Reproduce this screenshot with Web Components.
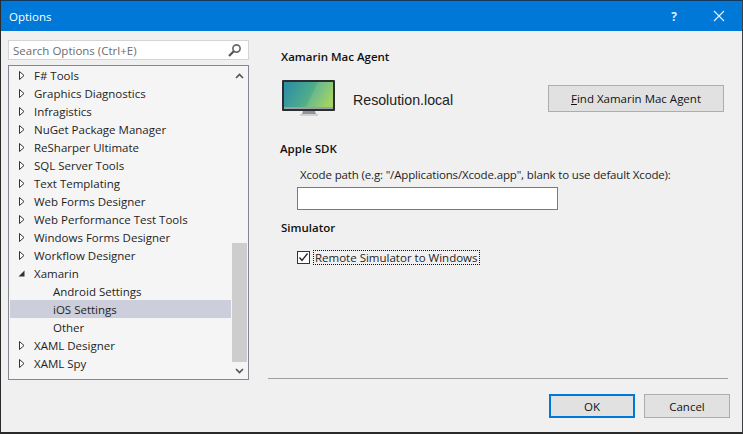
<!DOCTYPE html>
<html>
<head>
<meta charset="utf-8">
<title>Options</title>
<style>
  html, body { margin: 0; padding: 0; background: #f0f0f0; }
  body { font-family: "Open Sans", "Noto Sans", sans-serif; font-size: 11.5px; color: #1e1e1e; }
</style>
</head>
<body>
<options-dialog>
  <search-box slot="left" placeholder="Search Options (Ctrl+E)"></search-box>
  <options-tree slot="left">
    <tree-row kind="closed">F# Tools</tree-row>
    <tree-row kind="closed">Graphics Diagnostics</tree-row>
    <tree-row kind="closed">Infragistics</tree-row>
    <tree-row kind="closed">NuGet Package Manager</tree-row>
    <tree-row kind="closed">ReSharper Ultimate</tree-row>
    <tree-row kind="closed">SQL Server Tools</tree-row>
    <tree-row kind="closed">Text Templating</tree-row>
    <tree-row kind="closed">Web Forms Designer</tree-row>
    <tree-row kind="closed">Web Performance Test Tools</tree-row>
    <tree-row kind="closed">Windows Forms Designer</tree-row>
    <tree-row kind="closed">Workflow Designer</tree-row>
    <tree-row kind="open">Xamarin</tree-row>
    <tree-row kind="child">Android Settings</tree-row>
    <tree-row kind="child" selected>iOS Settings</tree-row>
    <tree-row kind="child">Other</tree-row>
    <tree-row kind="closed">XAML Designer</tree-row>
    <tree-row kind="closed">XAML Spy</tree-row>
  </options-tree>
  <ios-settings slot="right"></ios-settings>
</options-dialog>

<script>
class OptionsDialog extends HTMLElement {
    connectedCallback() {
        this.attachShadow({ mode: 'open' });
        this.shadowRoot.innerHTML = `
            <style>
                :host {
                    display: flex;
                    flex-direction: column;
                    box-sizing: border-box;
                    width: 743px;
                    height: 434px;
                    background: #f0f0f0;
                    border: 1px solid #1c3f66;
                    border-width: 1px 1px 2px 1px;
                    border-color: #14395f #3b3f44 #2a2a2a #2b2b2b;
                }
                .title {
                    display: flex;
                    align-items: center;
                    height: 30px;
                    flex: none;
                    background: #0078d7;
                    color: #fff;
                    padding-left: 8px;
                    font-size: 11.5px;
                }
                .title span { flex: 1; }
                .help {
                    width: 12px;
                    margin-right: 33px;
                    font-weight: 700;
                    font-size: 12px;
                    color: #dcecfa;
                    text-align: center;
                }
                .close { margin-right: 17px; display: block; }
                .main { flex: 1; display: flex; min-height: 0; }
                .left {
                    flex: none;
                    width: 241px;
                    margin: 9px 0 0 7px;
                    display: flex;
                    flex-direction: column;
                    gap: 5px;
                }
                .right { flex: 1; min-width: 0; display: flex; flex-direction: column; }
                .content { flex: 1; }
                .rule {
                    height: 1px;
                    background: #a0a0a0;
                    margin: 0 14px 0 19px;
                }
                .buttons {
                    flex: none;
                    height: 53px;
                    box-sizing: border-box;
                    padding: 15px 12px 0 0;
                    display: flex;
                    justify-content: flex-end;
                    gap: 9px;
                }
            </style>
            <div class="title">
                <span>Options</span>
                <div class="help">?</div>
                <svg class="close" width="12" height="12" viewBox="0 0 12 12"><path d="M1 1L11 11M11 1L1 11" stroke="#e4f0fb" stroke-width="1.2" fill="none"/></svg>
            </div>
            <div class="main">
                <div class="left"><slot name="left"></slot></div>
                <div class="right">
                    <div class="content"><slot name="right"></slot></div>
                    <div class="rule"></div>
                    <div class="buttons">
                        <vs-button default style="width:86px">OK</vs-button>
                        <vs-button style="width:86px">Cancel</vs-button>
                    </div>
                </div>
            </div>
        `;
    }
}

class SearchBox extends HTMLElement {
    connectedCallback() {
        this.attachShadow({ mode: 'open' });
        this.shadowRoot.innerHTML = `
            <style>
                :host {
                    display: flex;
                    align-items: center;
                    box-sizing: border-box;
                    height: 20px;
                    background: #fff;
                    border: 1px solid #d4d4d4;
                    padding: 0 6px 0 4px;
                    color: #6d6d6d;
                }
                span { flex: 1; }
            </style>
            <span>${this.getAttribute('placeholder')}</span>
            <svg width="15" height="15" viewBox="0 0 15 15">
                <circle cx="9.5" cy="5.5" r="3.6" fill="none" stroke="#6b6b6b" stroke-width="1.7"/>
                <path d="M6.8 8.2L2 13" stroke="#555" stroke-width="2.2" fill="none"/>
            </svg>
        `;
    }
}

class OptionsTree extends HTMLElement {
    connectedCallback() {
        this.attachShadow({ mode: 'open' });
        this.shadowRoot.innerHTML = `
            <style>
                :host {
                    display: flex;
                    box-sizing: border-box;
                    height: 315px;
                    background: #f5f5f5;
                    border: 1px solid #828790;
                    padding: 0 1px;
                }
                .rows { flex: 1; display: flex; flex-direction: column; min-width: 0; }
                .bar {
                    flex: none;
                    width: 15px;
                    margin: 1px 0 0 1px;
                    display: flex;
                    flex-direction: column;
                    align-items: stretch;
                }
                .arrow { height: 17px; flex: none; display: flex; align-items: center; justify-content: center; }
                .track { flex: 1; display: flex; flex-direction: column; justify-content: flex-end; }
                .thumb { height: 119px; background: #cdcdcd; }
            </style>
            <div class="rows"><slot></slot></div>
            <div class="bar">
                <div class="arrow"><svg width="9" height="6" viewBox="0 0 9 6"><path d="M1 5L4.5 1.5L8 5" fill="none" stroke="#555" stroke-width="1.7"/></svg></div>
                <div class="track"><div class="thumb"></div></div>
                <div class="arrow"><svg width="9" height="6" viewBox="0 0 9 6"><path d="M1 1L4.5 4.5L8 1" fill="none" stroke="#555" stroke-width="1.7"/></svg></div>
            </div>
        `;
    }
}

class TreeRow extends HTMLElement {
    connectedCallback() {
        const kind = this.getAttribute('kind');
        let icon = '';
        if (kind === 'closed') {
            icon = '<path d="M1.5 0.5L6 4.5L1.5 8.5Z" fill="#fff" stroke="#333" stroke-width="1"/>';
        } else if (kind === 'open') {
            icon = '<path d="M6.5 1.5V7.5H0.5Z" fill="#333"/>';
        }
        this.attachShadow({ mode: 'open' });
        this.shadowRoot.innerHTML = `
            <style>
                :host {
                    display: flex;
                    align-items: center;
                    height: 18px;
                    flex: none;
                    padding-left: 8px;
                }
                :host([selected]) { background: #cccedb; }
                svg { flex: none; width: 7px; height: 9px; margin-right: 9px; }
                .sp { flex: none; width: 19px; }
            </style>
            ${kind === 'child' ? '<div class="sp"></div>' : ''}
            <svg viewBox="0 0 7 9">${icon}</svg>
            <span><slot></slot></span>
        `;
    }
}

class VsButton extends HTMLElement {
    connectedCallback() {
        this.attachShadow({ mode: 'open' });
        this.shadowRoot.innerHTML = `
            <style>
                :host {
                    display: flex;
                    align-items: center;
                    justify-content: center;
                    box-sizing: border-box;
                    height: 24px;
                    background: #e1e1e1;
                    border: 1px solid #adadad;
                    color: #111;
                }
                :host([default]) { border: 2px solid #0078d7; }
            </style>
            <slot></slot>
        `;
    }
}

class SectionHead extends HTMLElement {
    connectedCallback() {
        this.attachShadow({ mode: 'open' });
        this.shadowRoot.innerHTML = `
            <style>
                :host { display: block; font-weight: 600; color: #111; line-height: 16px; }
            </style>
            <slot></slot>
        `;
    }
}

class MonitorIcon extends HTMLElement {
    connectedCallback() {
        this.attachShadow({ mode: 'open' });
        this.shadowRoot.innerHTML = `
            <style>:host { display: block; width: 54px; height: 38px; flex: none; } svg { display: block; }</style>
            <svg width="54" height="38" viewBox="0 0 54 38">
                <defs>
                    <linearGradient id="scr" x1="0" y1="0.3" x2="1" y2="0.6">
                        <stop offset="0" stop-color="#2f8fa4"/>
                        <stop offset="0.5" stop-color="#4dab8b"/>
                        <stop offset="1" stop-color="#97cf52"/>
                    </linearGradient>
                </defs>
                <path d="M21 32H33L34 35H20Z" fill="#8f9499"/>
                <rect x="18" y="35" width="18" height="2" fill="#cfd1d3"/>
                <rect x="0" y="1" width="53" height="31" rx="1" fill="#2b2e30"/>
                <rect x="2" y="3" width="49" height="25" fill="url(#scr)"/>
                <path d="M36 3H51V28H24Z" fill="#fff" opacity="0.1"/>
                <rect x="2" y="28" width="49" height="2" fill="#9aa0a3"/>
            </svg>
        `;
    }
}

class IosSettings extends HTMLElement {
    connectedCallback() {
        this.attachShadow({ mode: 'open' });
        this.shadowRoot.innerHTML = `
            <style>
                :host { display: flex; flex-direction: column; padding: 18px 17px 0 31px; }
                .agent { display: flex; align-items: center; margin: 14px 0 0 2px; }
                .host { margin-left: 17px; padding-top: 3px; font-family: "Liberation Sans", sans-serif; font-size: 14.2px; color: #222; flex: 1; }
                .inset { margin-left: 17px; }
                .path-label { margin: 10px 0 0 3px; line-height: 16px; letter-spacing: -0.15px; }
                .path-input {
                    box-sizing: border-box;
                    width: 261px;
                    height: 23px;
                    margin-top: 4px;
                    background: #fff;
                    border: 1px solid #7a7a7a;
                }
                .check { display: flex; align-items: center; margin-top: 14px; }
                .box {
                    box-sizing: border-box;
                    width: 13px;
                    height: 13px;
                    background: #fff;
                    border: 1px solid #333;
                    margin-right: 3px;
                }
                .box svg { display: block; }
                .focus { outline: 1px dotted #111; outline-offset: -1px; padding: 0 2px; line-height: 15px; }
            </style>
            <section-head style="margin-left:1px">Xamarin Mac Agent</section-head>
            <div class="agent">
                <monitor-icon></monitor-icon>
                <div class="host">Resolution.local</div>
                <vs-button style="width:176px;height:27px;margin-right:1px"><span><u>F</u>ind Xamarin Mac Agent</span></vs-button>
            </div>
            <section-head style="margin-top:24px">Apple SDK</section-head>
            <div class="inset">
                <div class="path-label">Xcode path (e.g: "/Applications/Xcode.app", blank to use default Xcode):</div>
                <div class="path-input"></div>
            </div>
            <section-head style="margin-top:10px;margin-left:1px">Simulator</section-head>
            <div class="inset">
                <div class="check">
                    <div class="box"><svg width="11" height="11" viewBox="0 0 11 11"><path d="M1.5 5.5L4 8.5L9.5 1.5" fill="none" stroke="#222" stroke-width="1.3"/></svg></div>
                    <div class="focus">Remote Simulator to Windows</div>
                </div>
            </div>
        `;
    }
}

customElements.define('options-dialog', OptionsDialog);
customElements.define('search-box', SearchBox);
customElements.define('options-tree', OptionsTree);
customElements.define('tree-row', TreeRow);
customElements.define('vs-button', VsButton);
customElements.define('section-head', SectionHead);
customElements.define('monitor-icon', MonitorIcon);
customElements.define('ios-settings', IosSettings);
</script>
</body>
</html>
